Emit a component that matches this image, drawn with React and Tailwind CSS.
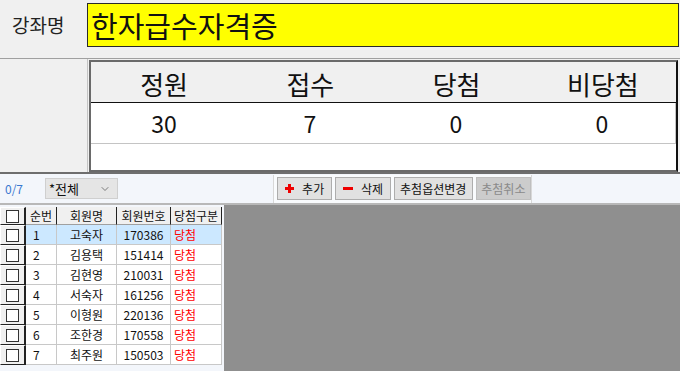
import React from 'react'
import { ChevronDown } from 'lucide-react'

const rows = [
  { no: 1, name: '고숙자', id: '170386', sel: true },
  { no: 2, name: '김용택', id: '151414' },
  { no: 3, name: '김현영', id: '210031' },
  { no: 4, name: '서숙자', id: '161256' },
  { no: 5, name: '이형원', id: '220136' },
  { no: 6, name: '조한경', id: '170558' },
  { no: 7, name: '최주원', id: '150503' },
]

const stats = [
  { label: '정원', value: '30' },
  { label: '접수', value: '7' },
  { label: '당첨', value: '0' },
  { label: '비당첨', value: '0' },
]

const Check = () => (
  <div className="w-[13px] h-[13px] bg-white border border-[#333]" />
)

const CheckCell = () => (
  <div className="h-full flex items-center justify-center bg-[#f0f0f0] border-t border-l border-t-white border-l-white border-r-2 border-b border-r-[#222] border-b-[#222]">
    <Check />
  </div>
)

export default function App() {
  return (
    <div
      className="w-[680px] h-[371px] overflow-hidden bg-[#f0f0f0] text-[#111] flex flex-col"
      style={{ fontFamily: '"Noto Sans CJK KR", "Noto Sans", sans-serif' }}
    >
      {/* 강좌명 */}
      <div className="h-[59px] flex items-start border-b border-[#a0a0a0] shrink-0">
        <div className="w-[87px] h-[50px] flex items-center pl-[12px] text-[19px] text-[#222]">
          강좌명
        </div>
        <div className="mt-[3px] h-[44px] flex-1 mr-[1px] border border-[#2a2a2a] bg-[#ffff00] flex items-center pl-[3px] text-[29px] leading-none">
          한자급수자격증
        </div>
      </div>

      {/* 통계 */}
      <div className="h-[113px] flex shrink-0">
        <div className="w-[88px] border-r border-[#c4c4c4]" />
        <div className="ml-[1px] mt-[1px] w-[589px] h-[112px] border-2 border-l-[#6a6a6a] border-t-[#6a6a6a] border-r-[#111] border-b-[#6a6a6a] bg-white flex flex-col">
          <div className="h-[41px] grid grid-cols-4 bg-[#f0f0f0] border-b border-[#111]">
            {stats.map((s) => (
              <div key={s.label} className="flex items-center justify-center pt-[4px] text-[26px] leading-none">
                {s.label}
              </div>
            ))}
          </div>
          <div className="h-[41px] grid grid-cols-4 border-b border-[#c4c4c4] border-r">
            {stats.map((s) => (
              <div key={s.label} className="flex items-center justify-center text-[23px] leading-none">
                {s.value}
              </div>
            ))}
          </div>
        </div>
      </div>

      {/* 툴바 */}
      <div className="h-[33px] shrink-0 flex items-stretch bg-[#f3f6fb] border-t-2 border-[#6e6e6e] border-b-2 border-b-[#b8b8b8]">
        <div className="w-[45px] pl-[5px] flex items-center text-[12px] text-[#3a78d0]">0/7</div>
        <div className="mt-[4px] h-[21px] w-[73px] bg-[#e5e5e5] border border-[#cfcfcf] flex items-center justify-between pl-[3px] pr-[6px] text-[13px]">
          <span>*전체</span>
          <ChevronDown size={12} color="#555" strokeWidth={1.5} />
        </div>
        <div className="ml-[155px] mt-[1px] w-[259px] bg-[#f9fbfd] border-l border-r border-[#d8d8d8] flex items-start pt-[2px] pl-[3px] gap-[3px] text-[12px]">
          <div className="w-[56px] h-[23px] bg-[#e1e1e1] border border-[#adadad] flex items-center justify-center gap-[8px]">
            <svg width="9" height="9" viewBox="0 0 9 9">
              <rect x="3" y="0" width="3" height="9" fill="#e00" />
              <rect x="0" y="3" width="9" height="3" fill="#e00" />
            </svg>
            <span>추가</span>
          </div>
          <div className="w-[56px] h-[23px] bg-[#e1e1e1] border border-[#adadad] flex items-center justify-center gap-[8px]">
            <svg width="10" height="4" viewBox="0 0 10 4">
              <rect x="0" y="0" width="10" height="3" fill="#e00" />
            </svg>
            <span>삭제</span>
          </div>
          <div className="w-[80px] h-[23px] bg-[#e1e1e1] border border-[#adadad] flex items-center justify-center">
            추첨옵션변경
          </div>
          <div className="w-[56px] h-[23px] bg-[#cccccc] border border-[#bfbfbf] flex items-center justify-center text-[#8a8a8a]">
            추첨취소
          </div>
        </div>
      </div>

      {/* 그리드 */}
      <div className="flex-1 flex min-h-0">
        <div className="w-[224px] bg-[#f3f6fb] pt-[2px] pr-[2px] text-[12px]">
          <div className="grid grid-cols-[26px_31px_60px_54px_51px] grid-rows-[18px] auto-rows-[20px]">
            <CheckCell />
            {['순번', '회원명', '회원번호', '당첨구분'].map((h) => (
              <div
                key={h}
                className="flex items-center justify-center bg-[#f0f0f0] border-r border-b border-r-[#222] border-b-[#a0a0a0] leading-none"
              >
                {h}
              </div>
            ))}
            {rows.map((r) => {
              const bg = r.sel ? 'bg-[#cce8ff]' : 'bg-white'
              return (
                <React.Fragment key={r.no}>
                  <CheckCell />
                  <div className={`${bg} flex items-center pl-[7px] border-r border-b border-[#c8c8c8]`}>{r.no}</div>
                  <div className={`${bg} flex items-center justify-center border-r border-b border-[#c8c8c8]`}>{r.name}</div>
                  <div className={`${bg} flex items-center justify-center border-r border-b border-[#c8c8c8]`}>{r.id}</div>
                  <div className={`${bg} flex items-center pl-[3px] text-[#ff0000] border-r border-b border-[#c8c8c8]`}>당첨</div>
                </React.Fragment>
              )
            })}
          </div>
        </div>
        <div className="flex-1 bg-[#8f8f8f]" />
      </div>
    </div>
  )
}
